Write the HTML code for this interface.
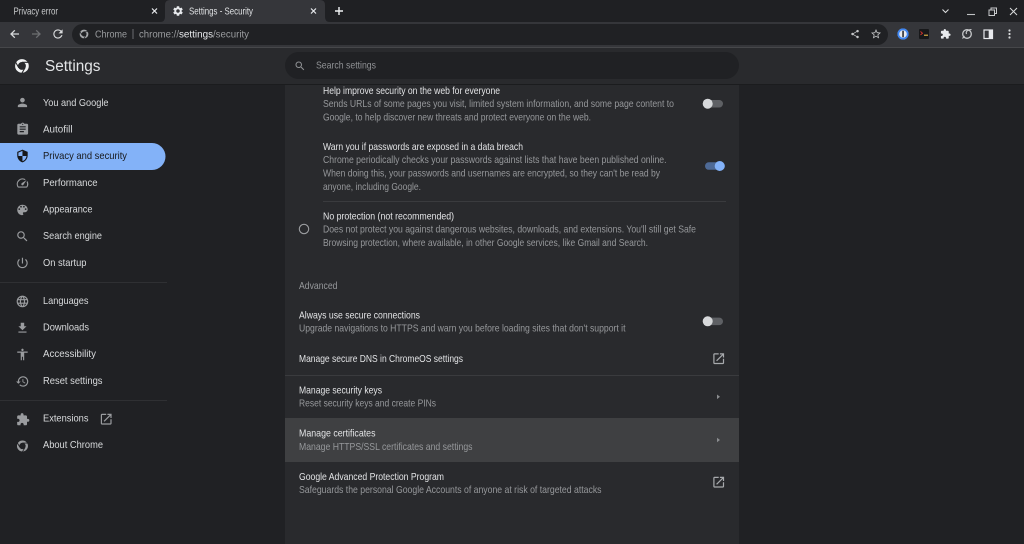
<!DOCTYPE html>
<html><head><meta charset="utf-8"><title>Settings - Security</title>
<style>
html,body{margin:0;padding:0;background:#202124;width:1024px;height:544px;overflow:hidden}
svg{display:block;position:absolute;left:0;top:0;filter:blur(.3px)}
text{font-family:"Liberation Sans",sans-serif;font-size:10.2px;white-space:pre}
.t{fill:#e3e4e6}
.s{fill:#96989b}
.n{fill:#d8dadc}
.i{fill:#9a9c9f}
</style></head><body>
<svg width="1024" height="544" viewBox="0 0 1024 544" xmlns="http://www.w3.org/2000/svg">
<defs>
<path id="person" d="M12 12c2.21 0 4-1.79 4-4s-1.79-4-4-4-4 1.79-4 4 1.79 4 4 4zm0 2c-2.67 0-8 1.34-8 4v2h16v-2c0-2.66-5.33-4-8-4z"/>
<path id="assign" d="M19 3h-4.18C14.4 1.84 13.3 1 12 1c-1.3 0-2.4.84-2.82 2H5c-1.1 0-2 .9-2 2v14c0 1.1.9 2 2 2h14c1.1 0 2-.9 2-2V5c0-1.1-.9-2-2-2zm-7 0c.55 0 1 .45 1 1s-.45 1-1 1-1-.45-1-1 .45-1 1-1zm2 14H7v-2h7v2zm3-4H7v-2h10v2zm0-4H7V7h10v2z"/>
<path id="shield" d="M12 1L3 5v6c0 5.55 3.84 10.74 9 12 5.16-1.26 9-6.45 9-12V5l-9-4zm0 10.99h7c-.53 4.12-3.28 7.79-7 8.94V12H5V6.3l7-3.11v8.8z"/>
<path id="speed" d="M20.38 8.57l-1.23 1.85a8 8 0 0 1-.22 7.58H5.07A8 8 0 0 1 15.58 6.85l1.85-1.23A10 10 0 0 0 3.35 19a2 2 0 0 0 1.72 1h13.85a2 2 0 0 0 1.74-1 10 10 0 0 0-.27-10.44zm-9.79 6.84a2 2 0 0 0 2.83 0l5.66-8.49-8.49 5.66a2 2 0 0 0 0 2.83z"/>
<path id="palette" d="M12 3c-4.97 0-9 4.03-9 9s4.03 9 9 9c.83 0 1.5-.67 1.5-1.5 0-.39-.15-.74-.39-1.01-.23-.26-.38-.61-.38-.99 0-.83.67-1.5 1.5-1.5H16c2.76 0 5-2.24 5-5 0-4.42-4.03-8-9-8zm-5.5 9c-.83 0-1.5-.67-1.5-1.5S5.67 9 6.5 9 8 9.67 8 10.5 7.33 12 6.5 12zm3-4C8.67 8 8 7.33 8 6.5S8.67 5 9.5 5s1.5.67 1.5 1.5S10.33 8 9.5 8zm5 0c-.83 0-1.5-.67-1.5-1.5S13.67 5 14.5 5s1.5.67 1.5 1.5S15.33 8 14.5 8zm3 4c-.83 0-1.5-.67-1.5-1.5S16.67 9 17.5 9s1.5.67 1.5 1.5-.67 1.5-1.5 1.5z"/>
<path id="search" d="M15.5 14h-.79l-.28-.27C15.41 12.59 16 11.11 16 9.5 16 5.91 13.09 3 9.5 3S3 5.91 3 9.5 5.91 16 9.5 16c1.61 0 3.09-.59 4.23-1.57l.27.28v.79l5 4.99L20.49 19l-4.99-5zm-6 0C7.01 14 5 11.99 5 9.5S7.01 5 9.5 5 14 7.01 14 9.5 11.99 14 9.5 14z"/>
<path id="power" d="M13 3h-2v10h2V3zm4.83 2.17l-1.42 1.42C17.99 7.86 19 9.81 19 12c0 3.87-3.13 7-7 7s-7-3.13-7-7c0-2.19 1.01-4.14 2.58-5.42L6.17 5.17C4.23 6.82 3 9.26 3 12c0 4.97 4.03 9 9 9s9-4.03 9-9c0-2.74-1.23-5.18-3.17-6.83z"/>
<path id="lang" d="M11.99 2C6.47 2 2 6.48 2 12s4.47 10 9.99 10C17.52 22 22 17.52 22 12S17.52 2 11.99 2zm6.93 6h-2.95c-.32-1.25-.78-2.45-1.38-3.56 1.84.63 3.37 1.91 4.33 3.56zM12 4.04c.83 1.2 1.48 2.53 1.91 3.96h-3.82c.43-1.43 1.08-2.76 1.91-3.96zM4.26 14C4.1 13.36 4 12.69 4 12s.1-1.36.26-2h3.38c-.08.66-.14 1.32-.14 2 0 .68.06 1.34.14 2H4.26zm.82 2h2.95c.32 1.25.78 2.45 1.38 3.56-1.84-.63-3.37-1.9-4.33-3.56zm2.95-8H5.08c.96-1.66 2.49-2.93 4.33-3.56C8.81 5.55 8.35 6.75 8.03 8zM12 19.96c-.83-1.2-1.48-2.53-1.91-3.96h3.82c-.43 1.43-1.08 2.76-1.91 3.96zM14.34 14H9.66c-.09-.66-.16-1.32-.16-2 0-.68.07-1.35.16-2h4.68c.09.65.16 1.32.16 2 0 .68-.07 1.34-.16 2zm.25 5.56c.6-1.11 1.06-2.31 1.38-3.56h2.95c-.96 1.65-2.49 2.93-4.33 3.56zM16.36 14c.08-.66.14-1.32.14-2 0-.68-.06-1.34-.14-2h3.38c.16.64.26 1.31.26 2s-.1 1.36-.26 2h-3.38z"/>
<path id="down" d="M19 9h-4V3H9v6H5l7 7 7-7zM5 18v2h14v-2H5z"/>
<path id="access" d="M12 2c1.1 0 2 .9 2 2s-.9 2-2 2-2-.9-2-2 .9-2 2-2zm9 7h-6v13h-2v-6h-2v6H9V9H3V7h18v2z"/>
<path id="restore" d="M13 3c-4.97 0-9 4.03-9 9H1l3.89 3.89.07.14L9 12H6c0-3.87 3.13-7 7-7s7 3.13 7 7-3.13 7-7 7c-1.93 0-3.68-.79-4.94-2.06l-1.42 1.42C8.27 19.99 10.51 21 13 21c4.97 0 9-4.03 9-9s-4.03-9-9-9zm-1 5v5l4.28 2.54.72-1.21-3.5-2.08V8H12z"/>
<path id="reload" d="M17.65 6.35C16.2 4.9 14.21 4 12 4c-4.42 0-7.99 3.58-7.99 8s3.57 8 7.99 8c3.73 0 6.84-2.55 7.73-6h-2.08c-.82 2.33-3.04 4-5.65 4-3.31 0-6-2.69-6-6s2.69-6 6-6c1.66 0 3.14.69 4.22 1.78L13 11h7V4l-2.35 2.35z"/>
<path id="ext" d="M20.5 11H19V7c0-1.1-.9-2-2-2h-4V3.5C13 2.12 11.88 1 10.5 1S8 2.12 8 3.5V5H4c-1.1 0-1.99.9-1.99 2v3.8H3.5c1.49 0 2.7 1.21 2.7 2.7s-1.21 2.7-2.7 2.7H2V20c0 1.1.9 2 2 2h3.8v-1.5c0-1.49 1.21-2.7 2.7-2.7 1.49 0 2.7 1.21 2.7 2.7V22H17c1.1 0 2-.9 2-2v-4h1.5c1.38 0 2.5-1.12 2.5-2.5S21.88 11 20.5 11z"/>
<path id="open" d="M19 19H5V5h7V3H5c-1.11 0-2 .9-2 2v14c0 1.1.89 2 2 2h14c1.1 0 2-.9 2-2v-7h-2v7zM14 3v2h3.59l-9.83 9.83 1.41 1.41L19 6.41V10h2V3h-7z"/>
<path id="share" d="M18 16.08c-.76 0-1.44.3-1.96.77L8.91 12.7c.05-.23.09-.46.09-.7s-.04-.47-.09-.7l7.05-4.11c.54.5 1.25.81 2.04.81 1.66 0 3-1.34 3-3s-1.34-3-3-3-3 1.34-3 3c0 .24.04.47.09.7L8.04 9.81C7.5 9.31 6.79 9 6 9c-1.66 0-3 1.34-3 3s1.34 3 3 3c.79 0 1.5-.31 2.04-.81l7.12 4.16c-.05.21-.08.43-.08.65 0 1.61 1.31 2.92 2.92 2.92 1.61 0 2.92-1.31 2.92-2.92s-1.31-2.92-2.92-2.92z"/>
<path id="star" d="M22 9.24l-7.19-.62L12 2 9.19 8.63 2 9.24l5.46 4.73L5.82 21 12 17.27 18.18 21l-1.63-7.03L22 9.24zM12 15.4l-3.76 2.27 1-4.28-3.32-2.88 4.38-.38L12 6.1l1.71 4.04 4.38.38-3.32 2.88 1 4.28L12 15.4z"/>
<path id="gear" d="M19.14 12.94c.04-.3.06-.61.06-.94 0-.32-.02-.64-.07-.94l2.03-1.58c.18-.14.23-.41.12-.61l-1.92-3.32c-.12-.22-.37-.29-.59-.22l-2.39.96c-.5-.38-1.03-.7-1.62-.94l-.36-2.54c-.04-.24-.24-.41-.48-.41h-3.84c-.24 0-.43.17-.47.41l-.36 2.54c-.59.24-1.13.57-1.62.94l-2.39-.96c-.22-.08-.47 0-.59.22L2.74 8.87c-.12.21-.08.47.12.61l2.03 1.58c-.05.3-.09.63-.09.94s.02.64.07.94l-2.03 1.58c-.18.14-.23.41-.12.61l1.92 3.32c.12.22.37.29.59.22l2.39-.96c.5.38 1.03.7 1.62.94l.36 2.54c.05.24.24.41.48.41h3.84c.24 0 .44-.17.47-.41l.36-2.54c.59-.24 1.13-.56 1.62-.94l2.39.96c.22.08.47 0 .59-.22l1.92-3.32c.12-.22.07-.47-.12-.61l-2.01-1.58zM12 15.6c-1.98 0-3.6-1.62-3.6-3.6s1.62-3.6 3.6-3.6 3.6 1.62 3.6 3.6-1.62 3.6-3.6 3.6z"/>
<g id="chrome"><path fill-rule="evenodd" d="M12 2a10 10 0 1 0 0 20 10 10 0 0 0 0-20zm0 5a5 5 0 1 1 0 10 5 5 0 0 1 0-10z"/><path d="M12 7h9.500M16.330 14.500l-4.750 8.200M7.670 14.500L2.900 6.300" fill="none" stroke-width="1.500"/></g>
</defs>

<!-- base -->
<rect width="1024" height="544" fill="#202124"/>
<!-- tab strip -->
<rect width="1024" height="22" fill="#1f2023"/>
<path d="M160 22q5 0 5-5V5q0-5 5-5h150q5 0 5 5v12q0 5 5 5z" fill="#35363a"/>
<text x="13.500" y="14.500" fill="#c9cbcd" textLength="44.500" lengthAdjust="spacingAndGlyphs">Privacy error</text>
<path d="M152 8.500l5 5m0-5l-5 5M311 8.500l5 5m0-5l-5 5" stroke="#e8eaed" stroke-width="1.200" fill="none"/>
<use href="#gear" transform="translate(172 5) scale(.5)" fill="#e8eaed"/>
<text x="189" y="14.500" fill="#e0e2e4" textLength="64" lengthAdjust="spacingAndGlyphs">Settings - Security</text>
<path d="M339 7v8M335 11h8" stroke="#f1f3f4" stroke-width="1.400" fill="none"/>
<!-- window controls -->
<path d="M942.500 9.500l3 3 3-3" stroke="#d8dadc" stroke-width="1.100" fill="none"/>
<path d="M967 14.500h8" stroke="#c0c2c4" stroke-width="1.100"/>
<path d="M989 10h5.500v5.500H989zM991 10V8h5.500v5.500h-2" stroke="#c8cacc" stroke-width="1" fill="none"/>
<path d="M1010 8l7 7m0-7l-7 7" stroke="#d8dadc" stroke-width="1" fill="none"/>

<!-- toolbar -->
<rect y="22" width="1024" height="25" fill="#35363a"/>
<rect y="47" width="1024" height="1" fill="#46474a"/>
<path d="M19 34h-7.500m3.300-3.700L11 34l3.800 3.700" stroke="#d8dadc" stroke-width="1.300" fill="none"/>
<path d="M32 34h7.500m-3.300-3.700L40 34l-3.800 3.700" stroke="#6d6f72" stroke-width="1.300" fill="none"/>
<use href="#reload" transform="translate(51 27) scale(.58)" fill="#d8dadc"/>
<rect x="72" y="24" width="816" height="21" rx="10.500" fill="#202124"/>
<use href="#chrome" transform="translate(78.500 28.500) scale(.46)" fill="#a6a8ab" stroke="#202124"/>
<text x="95" y="37.700" fill="#9a9c9f" textLength="32" lengthAdjust="spacingAndGlyphs">Chrome</text>
<rect x="132.500" y="29" width="1" height="10" fill="#6a6c6f"/>
<text x="139" y="37.700" fill="#9a9c9f" textLength="40" lengthAdjust="spacingAndGlyphs">chrome://</text>
<text x="179" y="37.700" fill="#e8eaed" textLength="34" lengthAdjust="spacingAndGlyphs">settings</text>
<text x="213" y="37.700" fill="#9a9c9f" textLength="36" lengthAdjust="spacingAndGlyphs">/security</text>
<use href="#share" transform="translate(850 29) scale(.42)" fill="#c4c6c8"/>
<use href="#star" transform="translate(870 28) scale(.5)" fill="#c4c6c8"/>
<!-- extension icons -->
<circle cx="903" cy="34" r="5.500" fill="#e8eaed"/>
<circle cx="903" cy="34" r="4.700" fill="none" stroke="#3f86f2" stroke-width="1.800"/>
<rect x="902.300" y="30.800" width="1.500" height="6.400" fill="#202124"/>
<rect x="919" y="29" width="10" height="10" rx="1" fill="#17181a"/>
<path d="M920.500 31.500l2 1.700-2 1.700" stroke="#d8352c" stroke-width=".9" fill="none"/>
<path d="M924 35.200h4" stroke="#e9b949" stroke-width="1.100"/>
<use href="#ext" transform="translate(940 28.500) scale(.46)" fill="#e8eaed"/>
<circle cx="967" cy="34" r="4.300" fill="none" stroke="#c8cacc" stroke-width="1.300"/>
<path d="M962.500 38.500l2-2.500M971.500 29.500c-1 0-3 .3-4.500 1.500-1 1-1 2-.5 3" stroke="#c8cacc" stroke-width="1.100" fill="none"/>
<rect x="984" y="30" width="8.500" height="8.500" fill="none" stroke="#e8eaed" stroke-width="1.200"/>
<rect x="988.700" y="30" width="3.800" height="8.500" fill="#e8eaed"/>
<circle cx="1009.500" cy="30.500" r="1.100" fill="#d8dadc"/><circle cx="1009.500" cy="34" r="1.100" fill="#d8dadc"/><circle cx="1009.500" cy="37.500" r="1.100" fill="#d8dadc"/>

<!-- settings header -->
<rect y="48" width="1024" height="36" fill="#292a2d"/>
<rect y="84" width="1024" height="1" fill="#1b1c1e"/>
<use href="#chrome" transform="translate(13.300 57.300) scale(.72)" fill="#f1f3f4" stroke="#292a2d"/>
<text x="45" y="71" fill="#e3e5e7" style="font-size:15.500px" textLength="55.500" lengthAdjust="spacingAndGlyphs">Settings</text>
<rect x="285" y="52" width="454" height="27" rx="13.500" fill="#202124"/>
<use href="#search" transform="translate(294 60) scale(.5)" fill="#8f9194"/>
<text x="316" y="68.500" fill="#8f9194" textLength="60" lengthAdjust="spacingAndGlyphs">Search settings</text>

<!-- sidebar -->
<path d="M0 143h152a13.500 13.500 0 0 1 0 27H0z" fill="#83b2f8"/>
<rect y="282" width="167" height="1" fill="#2f3033"/>
<rect y="400" width="167" height="1" fill="#2f3033"/>
<use href="#person" class="i" transform="translate(15.500 95.500) scale(.58)"/>
<use href="#assign" class="i" transform="translate(15.500 122) scale(.6)"/>
<use href="#shield" fill="#17181a" transform="translate(15.500 149) scale(.58)"/>
<use href="#speed" class="i" transform="translate(15.500 176) scale(.58)"/>
<use href="#palette" class="i" transform="translate(15.500 203) scale(.58)"/>
<use href="#search" class="i" transform="translate(15.500 229.500) scale(.58)"/>
<use href="#power" class="i" transform="translate(15.500 256) scale(.58)"/>
<use href="#lang" class="i" transform="translate(15.500 294.500) scale(.58)"/>
<use href="#down" class="i" transform="translate(15.500 321) scale(.58)"/>
<use href="#access" class="i" transform="translate(15.500 347.500) scale(.58)"/>
<use href="#restore" class="i" transform="translate(15.500 374.500) scale(.58)"/>
<use href="#ext" class="i" transform="translate(16 412.500) scale(.58)"/>
<use href="#chrome" class="i" stroke="#202124" transform="translate(15.500 439) scale(.58)"/>
<use href="#open" class="i" transform="translate(99 412) scale(.6)"/>
<g class="n">
<text x="43" y="105.800" textLength="65.500" lengthAdjust="spacingAndGlyphs">You and Google</text>
<text x="43" y="132.500" textLength="29.500" lengthAdjust="spacingAndGlyphs">Autofill</text>
<text x="43" y="159.200" style="fill:#17181a" textLength="84" lengthAdjust="spacingAndGlyphs">Privacy and security</text>
<text x="43" y="185.800" textLength="54.500" lengthAdjust="spacingAndGlyphs">Performance</text>
<text x="43" y="212.600" textLength="49.500" lengthAdjust="spacingAndGlyphs">Appearance</text>
<text x="43" y="239.200" textLength="59" lengthAdjust="spacingAndGlyphs">Search engine</text>
<text x="43" y="265.800" textLength="43.500" lengthAdjust="spacingAndGlyphs">On startup</text>
<text x="43" y="303.800" textLength="45.500" lengthAdjust="spacingAndGlyphs">Languages</text>
<text x="43" y="330.500" textLength="46" lengthAdjust="spacingAndGlyphs">Downloads</text>
<text x="43" y="357.200" textLength="53" lengthAdjust="spacingAndGlyphs">Accessibility</text>
<text x="43" y="383.800" textLength="59.500" lengthAdjust="spacingAndGlyphs">Reset settings</text>
<text x="43" y="421.400" textLength="45.500" lengthAdjust="spacingAndGlyphs">Extensions</text>
<text x="43" y="448.100" textLength="60" lengthAdjust="spacingAndGlyphs">About Chrome</text>
</g>

<!-- main card -->
<rect x="285" y="85" width="454" height="459" fill="#292a2d"/>
<rect x="323" y="201" width="403" height="1" fill="#3a3b3e"/>
<rect x="285" y="375" width="454" height="1" fill="#3a3b3e"/>
<rect x="285" y="418" width="454" height="44" fill="#3f4042"/>

<g class="t">
<text x="323" y="93.800" textLength="177" lengthAdjust="spacingAndGlyphs">Help improve security on the web for everyone</text>
<text x="323" y="149.800" textLength="200" lengthAdjust="spacingAndGlyphs">Warn you if passwords are exposed in a data breach</text>
<text x="323" y="219.300" textLength="131" lengthAdjust="spacingAndGlyphs">No protection (not recommended)</text>
<text x="299" y="318.300" textLength="121" lengthAdjust="spacingAndGlyphs">Always use secure connections</text>
<text x="299" y="361.800" textLength="164" lengthAdjust="spacingAndGlyphs">Manage secure DNS in ChromeOS settings</text>
<text x="299" y="393.300" textLength="83" lengthAdjust="spacingAndGlyphs">Manage security keys</text>
<text x="299" y="436.600" textLength="76.500" lengthAdjust="spacingAndGlyphs">Manage certificates</text>
<text x="299" y="479.800" textLength="145" lengthAdjust="spacingAndGlyphs">Google Advanced Protection Program</text>
</g>
<g class="s">
<text x="323" y="107.200" textLength="351" lengthAdjust="spacingAndGlyphs">Sends URLs of some pages you visit, limited system information, and some page content to</text>
<text x="323" y="120.500" textLength="268" lengthAdjust="spacingAndGlyphs">Google, to help discover new threats and protect everyone on the web.</text>
<text x="323" y="163.200" textLength="343.500" lengthAdjust="spacingAndGlyphs">Chrome periodically checks your passwords against lists that have been published online.</text>
<text x="323" y="176.500" textLength="337" lengthAdjust="spacingAndGlyphs">When doing this, your passwords and usernames are encrypted, so they can't be read by</text>
<text x="323" y="189.800" textLength="98" lengthAdjust="spacingAndGlyphs">anyone, including Google.</text>
<text x="323" y="232.600" textLength="373" lengthAdjust="spacingAndGlyphs">Does not protect you against dangerous websites, downloads, and extensions. You'll still get Safe</text>
<text x="323" y="245.900" textLength="325" lengthAdjust="spacingAndGlyphs">Browsing protection, where available, in other Google services, like Gmail and Search.</text>
<text x="299" y="288.800" textLength="38.500" lengthAdjust="spacingAndGlyphs">Advanced</text>
<text x="299" y="331.600" textLength="326.500" lengthAdjust="spacingAndGlyphs">Upgrade navigations to HTTPS and warn you before loading sites that don't support it</text>
<text x="299" y="406.600" textLength="137" lengthAdjust="spacingAndGlyphs">Reset security keys and create PINs</text>
<text x="299" y="449.800" textLength="173.500" lengthAdjust="spacingAndGlyphs">Manage HTTPS/SSL certificates and settings</text>
<text x="299" y="493.100" textLength="302.500" lengthAdjust="spacingAndGlyphs">Safeguards the personal Google Accounts of anyone at risk of targeted attacks</text>
</g>

<!-- radio -->
<circle cx="304" cy="229" r="4.700" fill="none" stroke="#9a9c9f" stroke-width="1.100"/>
<!-- toggles -->
<rect x="703" y="100" width="20" height="7.500" rx="3.750" fill="#5e6064"/>
<circle cx="707.700" cy="103.700" r="5" fill="#d7d9db"/>
<rect x="705" y="162.300" width="20" height="7.500" rx="3.750" fill="#4e6a96"/>
<circle cx="719.700" cy="166" r="5" fill="#83b2f8"/>
<rect x="703" y="317.600" width="20" height="7.500" rx="3.750" fill="#5e6064"/>
<circle cx="707.700" cy="321.300" r="5" fill="#d7d9db"/>
<!-- row icons -->
<use href="#open" fill="#a8aaad" transform="translate(711.500 351.500) scale(.6)"/>
<use href="#open" fill="#a8aaad" transform="translate(711.500 475) scale(.6)"/>
<path d="M717 394.500l3 2.300-3 2.300z" fill="#8a8c8f"/>
<path d="M717 437.700l3 2.300-3 2.300z" fill="#8a8c8f"/>
</svg>
</body></html>
